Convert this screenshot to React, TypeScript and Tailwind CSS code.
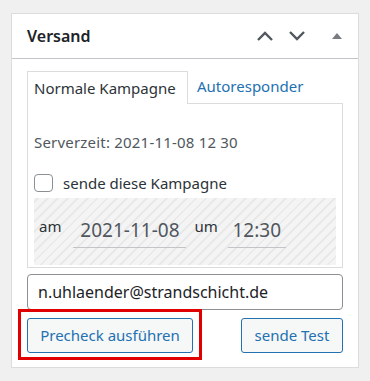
import React from "react";

export default function App() {
  const font = { fontFamily: '"Noto Sans", "Open Sans", Arial, sans-serif' };
  return (
    <div
      className="w-[370px] h-[381px] bg-[#f0f0f1] pt-[13px] px-[11px] overflow-hidden"
      style={font}
    >
      <div className="relative h-[355px] bg-white border border-[#dcdcde]">
        {/* header */}
        <div className="h-[45px] border-b border-[#c3c4c7] flex items-center pl-[15px] pr-[16px]">
          <h2 className="text-[16px] font-semibold text-[#1d2327] flex-1 leading-none">Versand</h2>
          <div className="flex items-center">
            <svg width="18" height="12" viewBox="0 0 18 12" className="mr-[14px]">
              <path d="M2 10 L9 3 L16 10" fill="none" stroke="#50575e" strokeWidth="2.4" />
            </svg>
            <svg width="18" height="12" viewBox="0 0 18 12" className="mr-[26px]">
              <path d="M2 2 L9 9 L16 2" fill="none" stroke="#50575e" strokeWidth="2.4" />
            </svg>
            <svg width="10" height="6" viewBox="0 0 10 6">
              <path d="M0 6 L5 0 L10 6 Z" fill="#787c82" />
            </svg>
          </div>
        </div>
        {/* body */}
        <div className="px-[15px] pt-[11px]">
          <div className="flex items-end h-[33px]">
            <div className="h-[33px] w-[161px] border border-b-0 border-[#dcdcde] bg-white relative z-10 -mb-px flex items-center pl-[6px] text-[15px] text-[#2c3338]">
              Normale Kampagne
            </div>
            <div className="h-[33px] flex items-center pl-[9px] text-[15px] text-[#2271b1]">
              Autoresponder
            </div>
          </div>
          <div className="border border-[#dcdcde] h-[165px] px-[6px] pt-[31px]">
            <div className="text-[15px] tracking-[0.2px] text-[#50575e] leading-none">Serverzeit: 2021-11-08 12 30</div>
            <div className="flex items-center mt-[24px] h-[18px]">
              <span className="w-[19px] h-[18px] border border-[#8c8f94] rounded-[4px] bg-white" />
              <span className="ml-[10px] text-[15px] text-[#2c3338]">sende diese Kampagne</span>
            </div>
            <div className="mt-[6px] h-[67px] bg-[repeating-linear-gradient(-45deg,#f4f4f4_0px,#f4f4f4_5px,#e9e9e9_5px,#e9e9e9_7px)] flex items-center pl-[5px]">
              <span className="text-[15px] text-[#2c3338] -mt-[10px]">am</span>
              <div className="ml-[12px] w-[113px] h-[34px] border-b border-[#c3c4c7] flex items-center justify-center text-[19px] text-[#50575e] -mt-[1px]">
                2021-11-08
              </div>
              <span className="ml-[8px] text-[15px] text-[#2c3338] -mt-[10px]">um</span>
              <div className="ml-[10px] w-[58px] h-[34px] border-b border-[#c3c4c7] flex items-center justify-center text-[19px] text-[#50575e] -mt-[1px]">
                12:30
              </div>
            </div>
          </div>
          <div className="mt-[6px] h-[36px] border border-[#8c8f94] rounded-[4px] flex items-center pl-[10px] text-[16px] text-[#1d2327]">
            n.uhlaender@strandschicht.de
          </div>
          <div className="mt-[8px] flex justify-between">
            <div className="relative">
              <button className="h-[35px] w-[166px] border border-[#2271b1] rounded-[3px] bg-[#f6f7f7] text-[#2271b1] text-[15px]">
                Precheck ausführen
              </button>
              <div className="absolute left-[-9px] top-[-9px] w-[184px] h-[51px] border-[3px] border-[#e00000] pointer-events-none" />
            </div>
            <button className="h-[35px] w-[102px] border border-[#2271b1] rounded-[3px] bg-[#f6f7f7] text-[#2271b1] text-[15px]">
              sende Test
            </button>
          </div>
        </div>
      </div>
    </div>
  );
}
